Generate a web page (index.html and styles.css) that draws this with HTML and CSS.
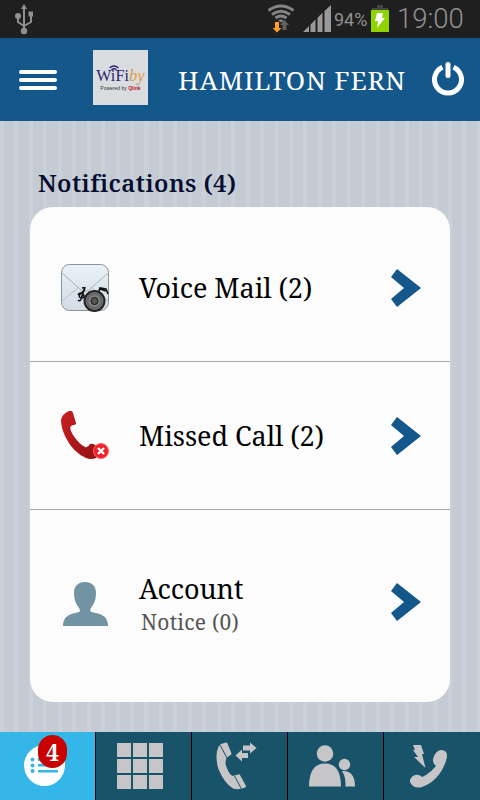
FILE: index.html
```html
<!DOCTYPE html>
<html lang="en">
<head>
    <meta charset="UTF-8">
    <meta name="viewport" content="width=device-width, initial-scale=1.0">
    <title>Notifications</title>
    <link rel="stylesheet" href="styles.css">
</head>
<body>
    <div class="status-bar">
        <svg class="usb" width="20" height="32" viewBox="0 0 20 32" fill="none" stroke="#909090" stroke-width="2">
            <path d="M10 5v22M4 13v6l6 4M17 12v7l-7 4"/>
            <path d="M10 1l3 5H7z" fill="#909090" stroke="none"/>
            <circle cx="4" cy="13" r="3" fill="#909090" stroke="none"/>
            <circle cx="10" cy="28" r="3.2" fill="#909090" stroke="none"/>
            <path d="M14.500 8.500h4.500v5h-4.500z" fill="#909090" stroke="none"/>
        </svg>
        <svg class="wifi" width="28" height="30" viewBox="0 0 28 30" fill="none" stroke="#858585" stroke-width="2.800">
            <path d="M1.500 6.500Q14 -2.500 26.500 6.500M5 10.500Q14 4 23 10.500M8.500 14Q14 10 19.500 14"/>
            <path d="M11 16.500q3-2 6 0l-3 2z" fill="#858585" stroke="none"/>
            <path d="M8 18h4v6h2.500L10 28.500 5.500 24H8z" fill="#ff9d25" stroke="none"/>
            <path d="M15.500 26h4v-5h2.500L17.500 16 13 21h2.500z" fill="#626262" stroke="none"/>
        </svg>
        <svg class="signal" width="28" height="27" viewBox="0 0 28 27" fill="#999">
            <path d="M0 27L6 21v6zM7.500 19.500l5-5V27h-5zM14.500 12.800l5-5V27h-5zM21.500 6l6.500-6v27h-6.500z"/>
        </svg>
        <span class="percent">94%</span>
        <svg class="battery" width="18" height="27" viewBox="0 0 18 27">
            <path d="M6 0h6v3h5v3H1V3h5z" fill="#444"/>
            <path d="M0 5h18v22H0z" fill="#8fd400"/>
            <path d="M6 8h6l-1 5h3l-8 10 1-7H4z" fill="#fff"/>
        </svg>
        <span class="clock">19:00</span>
    </div>

    <div class="header">
        <svg class="menu" width="38" height="20" viewBox="0 0 38 20" fill="#fff">
            <rect width="38" height="4" rx="2"/>
            <rect y="8" width="38" height="4" rx="2"/>
            <rect y="16" width="38" height="4" rx="2"/>
        </svg>
        <div class="logo">
            <svg class="logo-wave" width="10" height="7" viewBox="0 0 10 7" fill="none" stroke="#2b2473" stroke-width="1.300">
                <path d="M.5 3Q5-1 9.500 3M2.500 5Q5 2.500 7.500 5"/>
            </svg>
            <div class="logo-name">WiFi<i>by</i></div>
            <div class="logo-sub">Powered by <b>Qlink</b></div>
        </div>
        <h1>HAMILTON FERN</h1>
        <svg class="power" width="34" height="36" viewBox="0 0 34 36" fill="none" stroke="#fff" stroke-width="5">
            <path d="M11.500 6.200A13.500 13.500 0 1 0 22.500 6.200"/>
            <path d="M17 3.500v11" stroke-linecap="round"/>
        </svg>
    </div>

    <div class="content">
        <h2>Notifications (4)</h2>
        <div class="card">
            <div class="row voice">
                <svg class="icon" width="50" height="50" viewBox="0 0 50 50">
                    <defs>
                        <linearGradient id="mail" x2="0" y2="1">
                            <stop offset="0" stop-color="#e9f2f8"/>
                            <stop offset="1" stop-color="#d3dce5"/>
                        </linearGradient>
                        <radialGradient id="cone">
                            <stop offset="0" stop-color="#777"/>
                            <stop offset=".4" stop-color="#333"/>
                            <stop offset=".5" stop-color="#888"/>
                            <stop offset="1" stop-color="#555"/>
                        </radialGradient>
                    </defs>
                    <rect x="1.500" y="1.500" width="47" height="46" rx="8" fill="url(#mail)" stroke="#8c9298"/>
                    <path d="M2 38L19 24M48 38L31 24" stroke="#b9c1c9" fill="none"/>
                    <path d="M2 10l19 17q4 3 8 0L48 10" stroke="#a7afb7" fill="none"/>
                    <path d="M22 25q4-1 2 3l-4 3q-2 4 2 4 4-1 1-4-3-2-5 1M25 24l-4 12q-1 3-3 1M38 31l2-6 6 1 2 5M40 26l6 2" stroke="#111" stroke-width="1.600" fill="none"/>
                    <circle cx="34.500" cy="38" r="11" fill="#242424"/>
                    <circle cx="34.500" cy="38" r="8.500" fill="url(#cone)" stroke="#777"/>
                    <circle cx="34.500" cy="38" r="3.500" fill="#555" stroke="#222"/>
                </svg>
                <div class="label">Voice Mail (2)</div>
                <svg class="arrow" width="32" height="38" viewBox="0 0 32 38"><path d="M7 0l24 19L7 38 1 30l13-11L1 8z" fill="#14578b"/></svg>
            </div>
            <div class="row missed">
                <svg class="icon" width="50" height="50" viewBox="0 0 50 50">
                    <defs>
                        <linearGradient id="red" x2="1" y2="1">
                            <stop offset="0" stop-color="#c92022"/>
                            <stop offset="1" stop-color="#910e12"/>
                        </linearGradient>
                    </defs>
                    <path d="M9 0q3-1 4 2l3 10q0 2-3 2l-2 1q-2 3 2 9 6 9 12 12 3 1 5-3 2-1 5 1l7 6-6 7q-5 2-10 0Q13 41 6 27 1 17 1 9q1-6 8-9z" fill="url(#red)"/>
                    <circle cx="41" cy="40" r="7.500" fill="#f32027" stroke="#ff6568"/>
                    <path d="M38 37l6 6M44 37l-6 6" stroke="#fff" stroke-width="2.400"/>
                </svg>
                <div class="label">Missed Call (2)</div>
                <svg class="arrow" width="32" height="38" viewBox="0 0 32 38"><path d="M7 0l24 19L7 38 1 30l13-11L1 8z" fill="#14578b"/></svg>
            </div>
            <div class="row account">
                <svg class="icon" width="50" height="50" viewBox="0 0 50 50">
                    <path d="M25 3c7 0 11 4 11 11 0 8-3 12-5 15-2 4 0 4 5 5 8 2 12 5 12 13H3c0-8 4-11 12-13 5-1 6-1 4-5-2-3-5-7-5-15C14 7 18 3 25 3z" fill="#7193a2"/>
                </svg>
                <div class="label">Account<small>Notice (0)</small></div>
                <svg class="arrow" width="32" height="38" viewBox="0 0 32 38"><path d="M7 0l24 19L7 38 1 30l13-11L1 8z" fill="#14578b"/></svg>
            </div>
        </div>
    </div>

    <div class="tabs">
        <div class="tab active">
            <svg width="96" height="68" viewBox="0 0 96 68">
                <circle cx="44.500" cy="33.500" r="20.500" fill="#fff"/>
                <g fill="#35b6e9">
                    <circle cx="32.500" cy="27.500" r="2"/><circle cx="32.500" cy="33.500" r="2"/><circle cx="32.500" cy="39" r="2"/>
                    <path d="M38 26h20v3H38zM38 32h20v2.500H38zM38 38h20v2.500H38z"/>
                </g>
            </svg>
            <span class="badge">4</span>
        </div>
        <div class="tab">
            <svg width="96" height="68" viewBox="0 0 96 68" fill="#c6c6c8">
                <path d="M21 11h14v14H21zM37 11h14v14H37zM53 11h14v14H53zM21 27h14v14H21zM37 27h14v14H37zM53 27h14v14H53zM21 43h14v14H21zM37 43h14v14H37zM53 43h14v14H53z"/>
            </svg>
        </div>
        <div class="tab">
            <svg width="96" height="68" viewBox="0 0 96 68" fill="#c6c6c8">
                <path d="M29 12l5-1.500q1 0 1.500 1l4 10q0 1-1 1.500l-4 3q-2 5 0 9 3 8 6 9l6-1.500q1-.5 1.500.5l6 11q0 1-1 1.500-6 3-12 1Q32 51 26 36q-3-13 0-20 1-3 3-4z"/>
                <path d="M28 13l7 13M42.500 44l7 13" stroke="#195369"/>
                <path d="M51 13.500h7v-3l6.500 5.500-6.500 5.500v-3h-7zM56 21h-6v-3.500l-6.500 6 6.500 6V26h6z"/>
            </svg>
        </div>
        <div class="tab">
            <svg width="96" height="68" viewBox="0 0 96 68" fill="#c6c6c8">
                <circle cx="37" cy="21.500" r="8.300"/>
                <path d="M21 54.500q0-23 16-23t16 23z"/>
                <circle cx="56.500" cy="32.500" r="5.700"/>
                <path d="M54 39q13-1 13 15.500H57.500Q58 45 54 39z"/>
            </svg>
        </div>
        <div class="tab">
            <svg width="96" height="68" viewBox="0 0 96 68" fill="#c6c6c8">
                <path d="M29 13h8l3 9h-2l3.500 14L30 25h4l-5-7h2z"/>
                <path d="M55 18.500q4-1.500 7 1.500 2 3 0 9-7 20-24 26-8 2-11.500-4-2-4 2.500-7 5-3 9 1l4-2q6-4 10-9-3-2-3-6 1-7 6-9.500z"/>
            </svg>
        </div>
    </div>
</body>
</html>
```
FILE: styles.css
```css
* {
    box-sizing: border-box;
}

body {
    display: flex;
    flex-direction: column;
    height: 800px;
    margin: 0;
    overflow: hidden;
    font-family: "Noto Serif", "Droid Serif", "DejaVu Serif Condensed", "DejaVu Serif", serif;
}

svg {
    display: block;
    flex-shrink: 0;
}

h1, h2 {
    margin: 0;
    white-space: nowrap;
}

.status-bar {
    display: flex;
    align-items: flex-start;
    height: 38px;
    background: #1f1f1f;
    color: #929292;
    font-family: Roboto, sans-serif;
}

.usb {
    margin: 3px 0 0 14px;
}

.wifi {
    margin: 4px 0 0 233px;
}

.signal {
    margin: 5px 0 0 8px;
}

.percent {
    width: 37px;
    margin-left: 3px;
    font-size: 18px;
    line-height: 40px;
    white-space: nowrap;
}

.battery {
    margin-top: 5px;
}

.clock {
    margin-left: 8px;
    font-size: 27.5px;
    font-weight: 300;
    line-height: 38px;
}

.header {
    display: flex;
    height: 83px;
    background: #14578b;
    color: #fff;
}

.menu {
    margin: 32px 0 0 19px;
}

.logo {
    width: 55px;
    height: 55px;
    margin: 12px 0 0 36px;
    padding-top: 15px;
    background: #dadde0;
    color: #2b2473;
    text-align: center;
    white-space: nowrap;
}

.logo-wave {
    margin-left: 16px;
}

.logo-name {
    margin-top: -5px;
    font-family: "Liberation Serif", serif;
    font-size: 16px;
    line-height: 18px;
    letter-spacing: 0.2px;
}

.logo-name i {
    color: #db9b43;
}

.logo-sub {
    font-family: "Liberation Sans", sans-serif;
    font-size: 5px;
    line-height: 6px;
    color: #333;
}

.logo-sub b {
    color: #b5202b;
}

.header h1 {
    width: 230px;
    margin-left: 30px;
    font-size: 26px;
    font-weight: normal;
    line-height: 85px;
    letter-spacing: 0.85px;
}

.power {
    margin: 23px 0 0 23px;
}

.content {
    flex: 1;
    padding: 47px 30px 0;
    background: repeating-linear-gradient(90deg, #cad1d9 0, #cad1d9 4px, #c4cbd3 4px, #c4cbd3 14.450px);
}

.content h2 {
    height: 39px;
    padding-left: 8px;
    color: #050d30;
    font-size: 24px;
    font-weight: 600;
    line-height: 30px;
    letter-spacing: 0.42px;
}

.card {
    height: 495px;
    background: #fcfcfc;
    border-radius: 23px;
}

.row {
    display: flex;
    align-items: center;
    height: 148px;
    padding: 0 28px 0 30px;
    border-bottom: 1px solid #a9a9a9;
}

.voice {
    height: 155px;
    padding-top: 8px;
}

.account {
    height: 192px;
    padding-top: 0;
    padding-bottom: 4px;
    border-bottom: none;
}

.account .arrow {
    margin-bottom: 4px;
}

.label {
    flex: 1;
    margin-left: 29px;
    font-size: 27px;
    line-height: 36px;
    letter-spacing: -0.05px;
    white-space: nowrap;
}

.label small {
    display: block;
    padding-left: 2px;
    color: #555;
    font-size: 21px;
    line-height: 30px;
    letter-spacing: 0.25px;
}

.tabs {
    display: flex;
    height: 68px;
    background: #195369;
}

.tab {
    position: relative;
    width: 96px;
    border-right: 1px solid #000;
}

.tab:last-child {
    border-right: none;
}

.active {
    background: #35b6e9;
}

.badge {
    position: absolute;
    top: 3px;
    left: 38px;
    width: 29px;
    height: 33px;
    border-radius: 15px;
    background: #c90000;
    color: #fff;
    font-size: 23px;
    font-weight: bold;
    line-height: 34px;
    text-align: center;
}
```
